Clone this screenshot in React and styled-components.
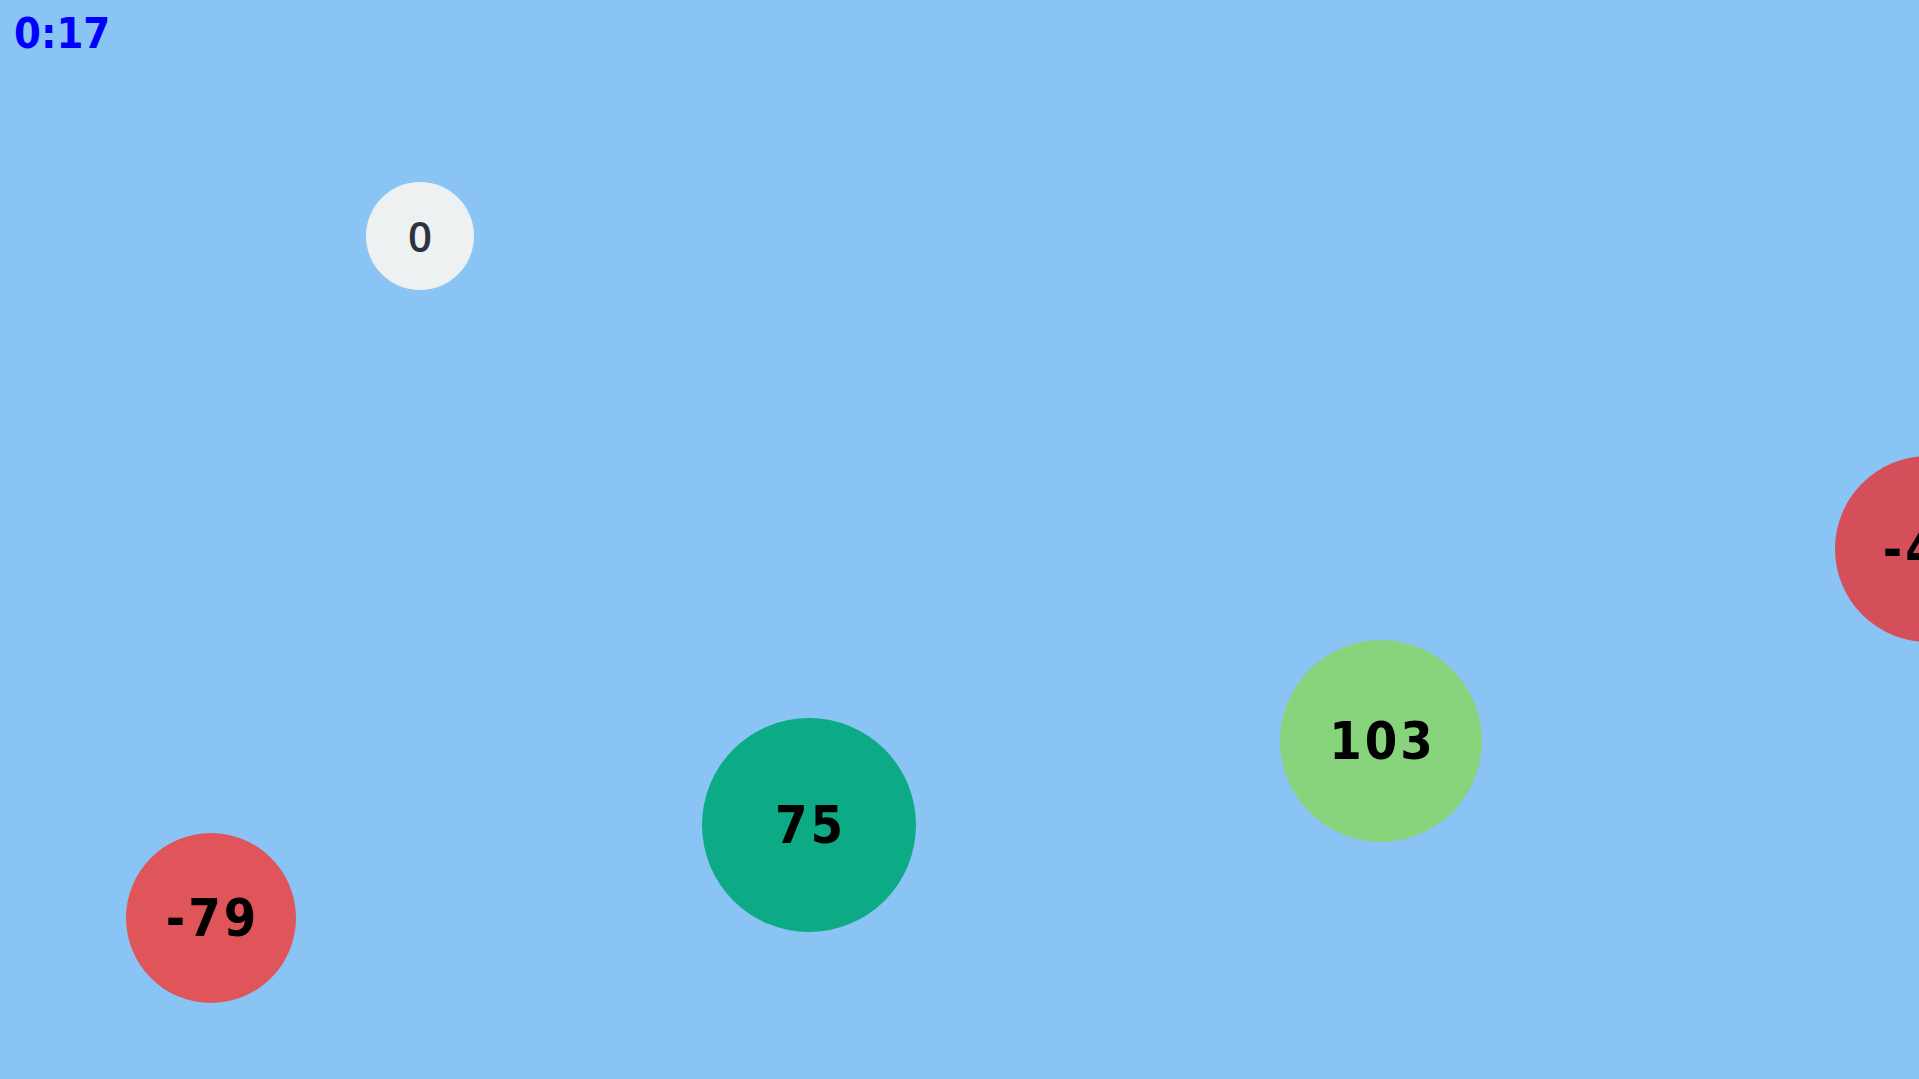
import React from "react";
import styled, { createGlobalStyle } from "styled-components";

const Global = createGlobalStyle`
  html, body { margin: 0; padding: 0; overflow: hidden; }
  body { background: #8ac4f4; font-family: "DejaVu Sans Condensed", "DejaVu Sans", sans-serif; }
`;

const Field = styled.div`
  position: relative;
  width: 100vw;
  height: 100vh;
  overflow: hidden;
  background: #8ac4f4;
`;

const Timer = styled.div`
  padding: 12px 0 0 14px;
  font-family: "DejaVu Sans Condensed", "DejaVu Sans", sans-serif;
  font-stretch: condensed;
  font-weight: bold;
  font-size: 43px;
  line-height: 1;
  color: #0000ff;
`;

const Bubble = styled.div`
  position: absolute;
  left: ${(p) => p.$x - p.$r}px;
  top: ${(p) => p.$y - p.$r}px;
  width: ${(p) => p.$r * 2}px;
  height: ${(p) => p.$r * 2}px;
  box-sizing: border-box;
  padding-left: 3px;
  border-radius: 50%;
  background: ${(p) => p.$color};
  display: flex;
  align-items: center;
  justify-content: center;
  font-family: "DejaVu Sans Condensed", "DejaVu Sans", sans-serif;
  font-stretch: condensed;
  font-weight: bold;
  font-size: 52px;
  letter-spacing: 3px;
  line-height: 1;
  color: #000;
  white-space: nowrap;
`;

const ZeroBubble = styled(Bubble)`
  padding-left: 0;
  letter-spacing: 0;
  font-family: "Open Sans", "Noto Sans", sans-serif;
  font-stretch: normal;
  font-weight: 600;
  font-size: 42px;
  color: #2d333d;
`;

const bubbles = [
  { x: 1928, y: 549, r: 93, color: "#d44f5a", value: "-42" },
  { x: 1381, y: 741, r: 101, color: "#88d47c", value: "103" },
  { x: 809, y: 825, r: 107, color: "#0cab85", value: "75" },
  { x: 211, y: 918, r: 85, color: "#e05559", value: "-79" },
];

export default function App() {
  return (
    <Field>
      <Global />
      <Timer>0:17</Timer>
      <ZeroBubble $x={420} $y={236} $r={54} $color="#edf1f1">
        0
      </ZeroBubble>
      {bubbles.map((b, i) => (
        <Bubble key={i} $x={b.x} $y={b.y} $r={b.r} $color={b.color}>
          {b.value}
        </Bubble>
      ))}
    </Field>
  );
}
